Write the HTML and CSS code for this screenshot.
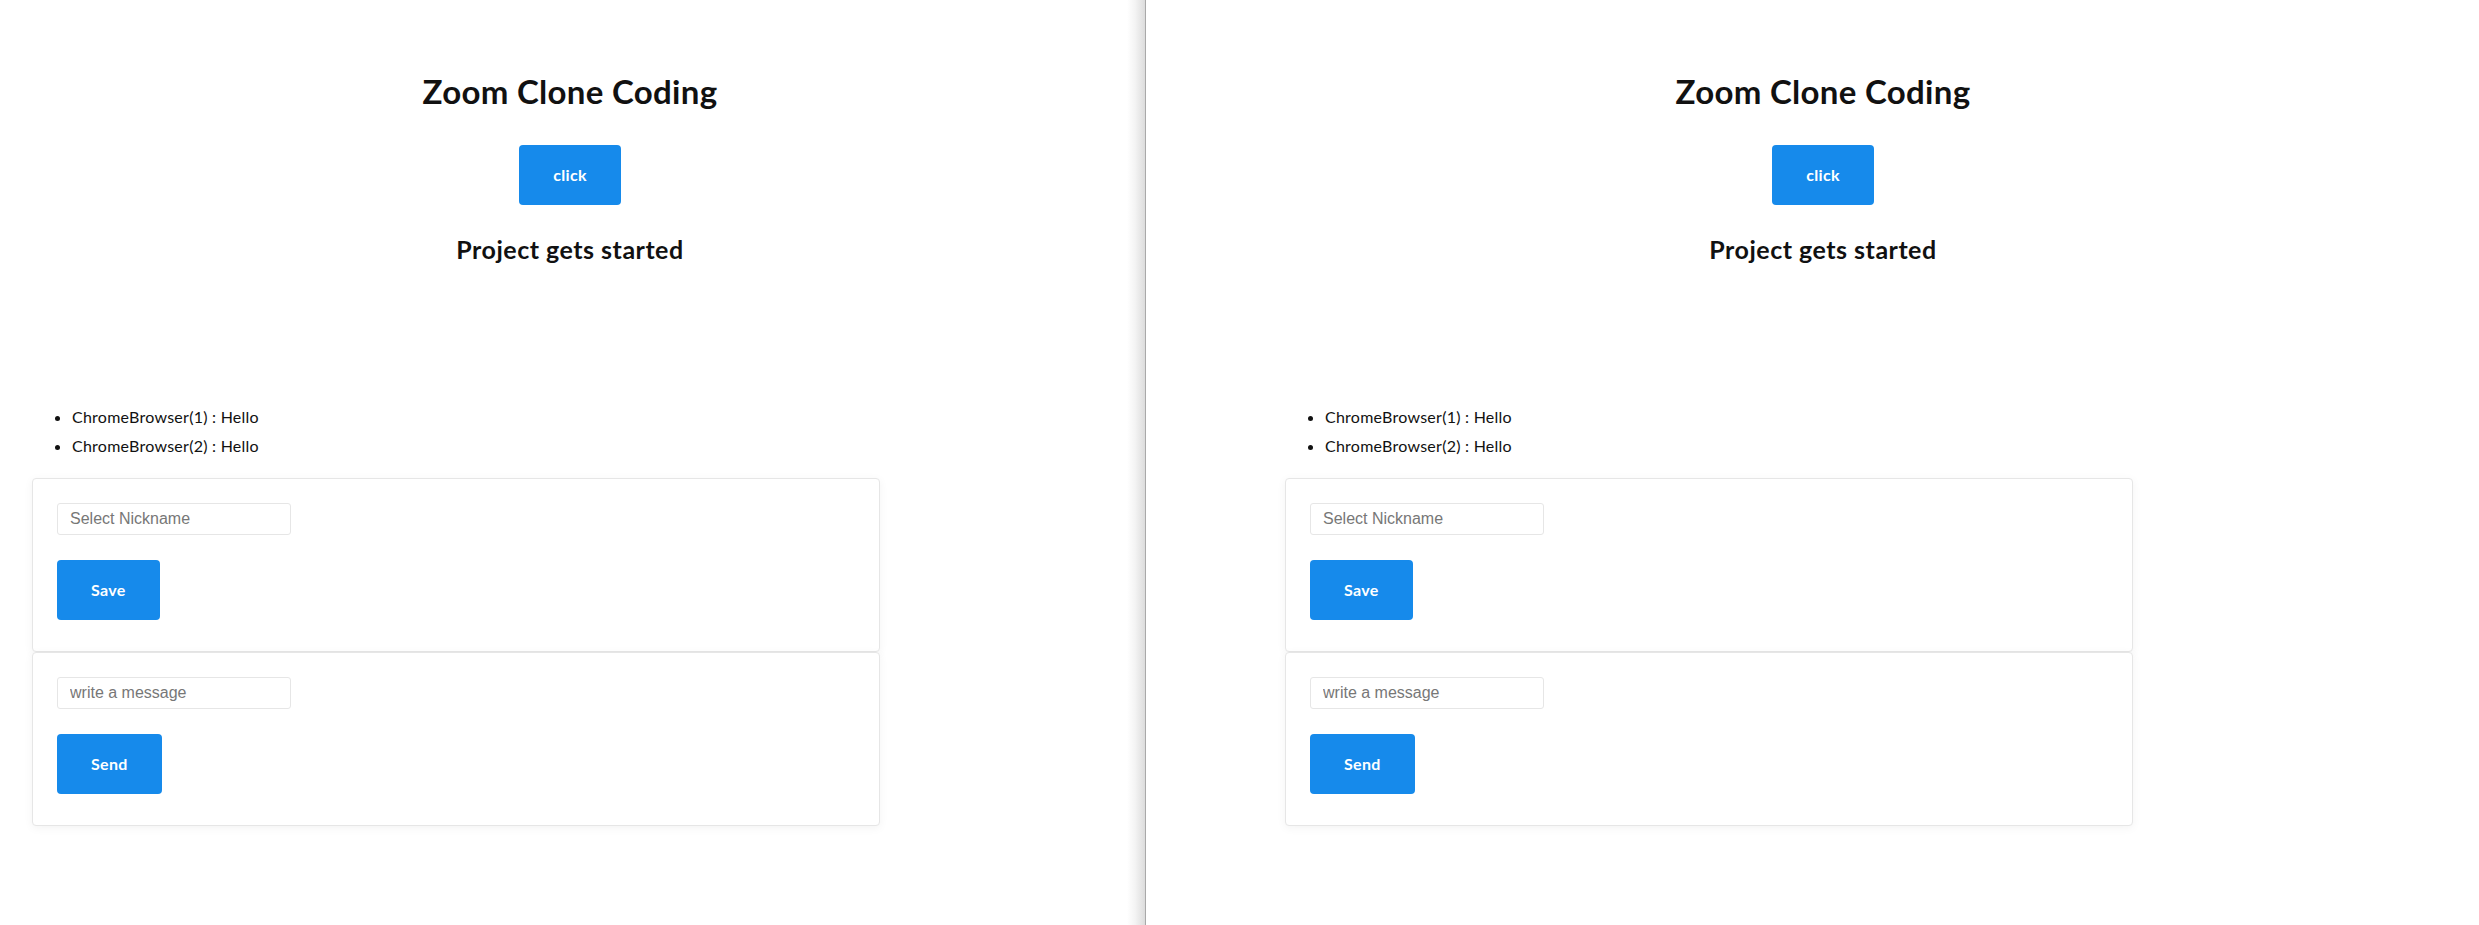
FILE: index.html
```html
<!DOCTYPE html>
<html lang="en">
<head>
    <meta charset="UTF-8">
    <meta name="viewport" content="width=device-width, initial-scale=1.0">
    <title>Zoom Clone Coding</title>
    <link rel="stylesheet" href="styles.css">
</head>
<body>
    <div class="pane pane-left">
        <main class="app">
            <h1>Zoom Clone Coding</h1>
            <button class="btn">click</button>
            <h2>Project gets started</h2>

            <ul class="messages">
                <li>ChromeBrowser(1) : Hello</li>
                <li>ChromeBrowser(2) : Hello</li>
            </ul>

            <div class="forms">
                <form class="card" id="nick">
                    <input type="text" placeholder="Select Nickname" required>
                    <button class="btn">Save</button>
                </form>
                <form class="card" id="message">
                    <input type="text" placeholder="write a message" required>
                    <button class="btn">Send</button>
                </form>
            </div>
        </main>
    </div>

    <div class="pane pane-right">
        <main class="app">
            <h1>Zoom Clone Coding</h1>
            <button class="btn">click</button>
            <h2>Project gets started</h2>

            <ul class="messages">
                <li>ChromeBrowser(1) : Hello</li>
                <li>ChromeBrowser(2) : Hello</li>
            </ul>

            <div class="forms">
                <form class="card">
                    <input type="text" placeholder="Select Nickname" required>
                    <button class="btn">Save</button>
                </form>
                <form class="card">
                    <input type="text" placeholder="write a message" required>
                    <button class="btn">Send</button>
                </form>
            </div>
        </main>
    </div>
</body>
</html>
```

FILE: styles.css
```css
:root {
    --blue: #168aeb;
    --border: #e6e6e6;
    --text: #111;
}

* {
    margin: 0;
    padding: 0;
    box-sizing: border-box;
}

body {
    font-family: 'Lato', 'Noto Sans', sans-serif;
    color: var(--text);
    background-color: #fff;
    display: flex;
    height: 925px;
    overflow: hidden;
}

/* two browser windows side by side */
.pane {
    height: 100%;
}

.pane-left {
    width: 1146px;
    flex-shrink: 0;
    border-right: 1px solid #a9a9a9;
    background: linear-gradient(to right, #fff calc(100% - 18px), #f4f4f4 calc(100% - 10px), #dcdcdc);
}

.pane-right {
    flex: 1;
    padding-left: 107px;
}

.app {
    width: 1140px;
    padding-top: 72px;
    display: flex;
    flex-direction: column;
    align-items: center;
}

h1 {
    font-size: 33px;
    line-height: 1.2;
    font-weight: 700;
    letter-spacing: 0.3px;
    text-align: center;
}

h2 {
    font-size: 25px;
    line-height: 1.2;
    font-weight: 700;
    letter-spacing: 0.5px;
    text-align: center;
    margin-top: 29px;
}

.btn {
    height: 60px;
    padding: 0 34px;
    background-color: var(--blue);
    color: #fff;
    border: none;
    border-radius: 4px;
    font-family: inherit;
    font-size: 16px;
    font-weight: 700;
    letter-spacing: 0.3px;
    cursor: pointer;
}

.app > .btn {
    margin-top: 33px;
}

.messages {
    align-self: stretch;
    margin: 138px 0 0 32px;
    padding-left: 40px;
    font-size: 16px;
    font-weight: 400;
    letter-spacing: 0.25px;
}

.messages li {
    line-height: 29px;
}

.forms {
    align-self: flex-start;
    width: 848px;
    margin: 18px 0 0 32px;
}

.card {
    display: flex;
    flex-direction: column;
    align-items: flex-start;
    gap: 25px;
    padding: 24px 24px 31px;
    border: 1px solid var(--border);
    border-radius: 4px;
    background-color: #fff;
    box-shadow: 0 2px 10px rgba(0, 0, 0, 0.05);
}

.card input {
    width: 234px;
    height: 32px;
    padding: 0 12px;
    border: 1px solid var(--border);
    border-radius: 3px;
    font-family: 'Liberation Sans', Arial, sans-serif;
    font-size: 16px;
    color: var(--text);
}

.card input::placeholder {
    color: #777;
}

.card input:focus {
    outline: none;
    border-color: var(--blue);
}
```
